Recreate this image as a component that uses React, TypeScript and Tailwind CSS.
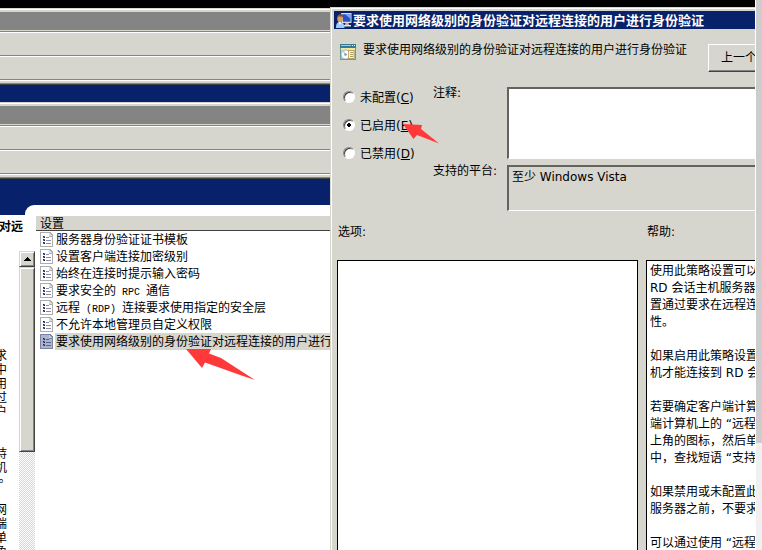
import type { ReactNode } from "react";

const policies: { id: string; label: ReactNode; selected?: boolean }[] = [
  { id: "template", label: "服务器身份验证证书模板" },
  { id: "encryption", label: "设置客户端连接加密级别" },
  { id: "prompt", label: "始终在连接时提示输入密码" },
  { id: "rpc", label: <>要求安全的<Mono> RPC </Mono>通信</> },
  { id: "rdp", label: <>远程<Mono> (RDP) </Mono>连接要求使用指定的安全层</> },
  { id: "admin", label: "不允许本地管理员自定义权限" },
  { id: "nla", label: "要求使用网络级别的身份验证对远程连接的用户进行", selected: true },
];

const description = ["求", "中", "用", "过", "户", "", "", "持", "机", "。", "", "网", "端", "单", "角"];

const states = [
  { value: "none", label: "未配置", accessKey: "C" },
  { value: "enabled", label: "已启用", accessKey: "E" },
  { value: "disabled", label: "已禁用", accessKey: "D" },
];

const helpText = [
  ["使用此策略设置可以", "RD 会话主机服务器", "置通过要求在远程连", "性。"],
  ["如果启用此策略设置", "机才能连接到 RD 会"],
  ["若要确定客户端计算", "端计算机上的 “远程", "上角的图标，然后单", "中，查找短语 “支持"],
  ["如果禁用或未配置此", "服务器之前，不要求"],
  ["可以通过使用 “远程"],
];

export default function App() {
  return (
    <div className="flex h-screen overflow-hidden bg-white font-['Noto_Sans','Noto_Sans_CJK_SC',sans-serif] text-[12px] leading-[17px] text-black">
      <div className="flex min-w-0 flex-1 flex-col bg-black pt-[7px]">
        <div className="flex min-h-0 flex-1">
          <Console />
          <PolicyDialog />
        </div>
      </div>
      <div className="w-[7px] shrink-0 border-l border-white bg-[#f0f0f0]">
        <div className="h-[443px] bg-[#cdcdcd]" />
      </div>
    </div>
  );
}

function Mono({ children }: { children: ReactNode }) {
  return <span className="whitespace-pre font-['Liberation_Mono',monospace] text-[10px]">{children}</span>;
}

function Console() {
  return (
    <div className="relative flex w-[330px] shrink-0 flex-col pt-px">
      <WindowFrame />
      <div className="h-[17px] shrink-0 bg-[#08216b]" />
      <WindowFrame />
      <div className="shrink-0 bg-[#08216b] pt-[26px]">
        <div className="ml-[25px] h-[10px] rounded-tl-[9px] bg-white" />
      </div>
      <div className="flex min-h-0 flex-1 bg-white">
        <Sidebar />
        <div className="min-w-0 flex-1 overflow-hidden pt-px">
          <div className="ml-px h-[15px] border-b border-[#424242] bg-[#d6d6ce] pl-1 leading-[15px]">设置</div>
          <ul>
            {policies.map((p) => (
              <li key={p.id} className="flex h-[17px] items-center pl-[5px]">
                <PolicyIcon selected={p.selected} />
                <span
                  className={`ml-px h-[17px] flex-1 whitespace-nowrap pl-px ${p.selected ? "bg-[#d6d6ce]" : ""}`}
                >
                  {p.label}
                </span>
              </li>
            ))}
          </ul>
        </div>
      </div>
      <svg className="absolute left-[186px] top-[342px]" width="70" height="32" viewBox="0 0 70 32">
        <path d="M0 0 25 0 23 4.5 35 9 69 31 57 27 19 13.5 16 19Z" fill="#ff3939" />
      </svg>
    </div>
  );
}

function WindowFrame() {
  return (
    <div className="shrink-0 border-b border-t border-b-[#424242] border-t-[#d6d6ce]">
      <div className="border-b border-t border-b-[#848484] border-t-white bg-[#d6d6ce] pt-0.5">
        <div className="mb-px h-[18px] bg-[#848484]" />
        <Groove className="h-6" />
        <Groove className="h-6" />
        <Groove className="h-1" />
      </div>
    </div>
  );
}

function Groove({ className }: { className: string }) {
  return (
    <div className={`border-t border-[#848484] ${className}`}>
      <div className="h-px bg-white" />
    </div>
  );
}

function Sidebar() {
  return (
    <div className="flex w-[35px] shrink-0 flex-col">
      <div className="flex h-9 shrink-0 justify-end overflow-hidden whitespace-nowrap pr-3 pt-[3px] font-bold">
        对远
      </div>
      <div className="flex min-h-0 flex-1">
        <div className="w-[19px] overflow-hidden pr-3 pt-[97px] font-['Noto_Sans_CJK_TC',sans-serif] leading-[14px]">
          {description.map((line, i) => (
            <p key={i} className="flex h-[14px] justify-end">
              {line}
            </p>
          ))}
        </div>
        <div className="flex w-4 flex-col bg-[repeating-conic-gradient(#d6d6ce_0_25%,#ffffff_0_50%)] bg-[length:2px_2px]">
          <button
            aria-label="向上滚动"
            className="flex h-4 shrink-0 items-center justify-center border border-b-[#424242] border-l-[#d6d6ce] border-r-[#424242] border-t-[#d6d6ce] bg-[#d6d6ce] shadow-[inset_1px_1px_0_#fff,inset_-1px_-1px_0_#848484]"
          >
            <svg width="7" height="4" viewBox="0 0 7 4" shapeRendering="crispEdges">
              <path d="M3 0h1v1h1v1h1v1h1v1H0V3h1V2h1V1h1Z" />
            </svg>
          </button>
          <div className="h-[185px] shrink-0 border border-b-[#424242] border-l-[#d6d6ce] border-r-[#424242] border-t-[#d6d6ce] bg-[#d6d6ce] shadow-[inset_1px_1px_0_#fff,inset_-1px_-1px_0_#848484]" />
        </div>
      </div>
    </div>
  );
}

function PolicyDialog() {
  return (
    <section className="relative flex min-w-0 flex-1 flex-col overflow-hidden border-l border-t border-[#d6d6ce] bg-[#d6d6ce] font-['DejaVu_Sans','Noto_Sans_CJK_SC',sans-serif]">
      <div className="flex min-h-0 flex-1 flex-col border-l border-t border-white">
        <h1 className="ml-0.5 mt-0.5 flex h-[18px] shrink-0 items-center gap-px whitespace-nowrap bg-[#08216b] pl-0.5 text-[13px] font-bold leading-[18px] text-white">
          <RemoteUserIcon />
          <span className="pt-px">要求使用网络级别的身份验证对远程连接的用户进行身份验证</span>
        </h1>
        <div className="flex h-[58px] shrink-0 items-start pl-2 pt-[15px]">
          <SettingIcon />
          <p className="-mt-0.5 ml-[7px] w-[345px] shrink-0 whitespace-nowrap">
            要求使用网络级别的身份验证对远程连接的用户进行身份验证
          </p>
          <button className="h-7 w-24 shrink-0 whitespace-nowrap border border-b-[#424242] border-l-white border-r-[#424242] border-t-white bg-[#d6d6ce] pl-3 pt-px text-left shadow-[inset_0_-1px_0_#848484]">
            上一个
          </button>
        </div>
        <div className="flex h-[124px] shrink-0">
          <fieldset className="w-[101px] shrink-0 pl-[11px] pt-0.5">
            {states.map((s) => (
              <label key={s.value} className="mb-[10px] flex h-[18px] items-start gap-[5px] whitespace-nowrap">
                <input
                  type="radio"
                  name="state"
                  value={s.value}
                  defaultChecked={s.value === "enabled"}
                  className="mt-0.5 h-3 w-3 shrink-0 appearance-none rounded-full border border-b-white border-l-[#848484] border-r-white border-t-[#848484] bg-white shadow-[inset_1px_1px_0_#424242] checked:bg-[radial-gradient(circle,#000_2px,#fff_2px)]"
                />
                <span className="pt-px">
                  {s.label}(<u>{s.accessKey}</u>)
                </span>
              </label>
            ))}
          </fieldset>
          <div className="grid min-w-0 flex-1 grid-cols-[74px_1fr] grid-rows-[72px_46px] content-start gap-y-[6px]">
            <label htmlFor="comment" className="-mt-0.5">
              注释:
            </label>
            <textarea
              id="comment"
              className="h-full w-full resize-none border-b border-l-2 border-t-2 border-b-white border-l-[#63635f] border-t-[#63635f] bg-white p-1 outline-none"
            />
            <label htmlFor="platform" className="-mt-0.5 whitespace-nowrap">
              支持的平台:
            </label>
            <textarea
              id="platform"
              readOnly
              defaultValue="至少 Windows Vista"
              className="h-full w-full resize-none overflow-hidden border-b border-l-2 border-t-2 border-b-white border-l-[#63635f] border-t-[#63635f] bg-[#d6d6ce] pl-[3px] pt-0.5 outline-none"
            />
          </div>
        </div>
        <div className="flex min-h-0 flex-1 gap-2 pl-[5px] pt-3">
          <div className="flex w-[301px] shrink-0 flex-col">
            <h2 className="h-[37px] shrink-0 pl-px pt-px">选项:</h2>
            <div className="flex-1 border border-b-0 border-black bg-white" />
          </div>
          <div className="flex min-h-0 min-w-0 flex-1 flex-col">
            <h2 className="h-[37px] shrink-0 pl-px pt-px">帮助:</h2>
            <div className="min-h-0 flex-1 overflow-hidden whitespace-nowrap border-l border-t border-black bg-white pl-[3px] pt-0.5">
              {helpText.map((lines) => (
                <p key={lines[0]} className="mb-[17px]">
                  {lines.map((line) => (
                    <span key={line} className="block">
                      {line}
                    </span>
                  ))}
                </p>
              ))}
            </div>
          </div>
        </div>
      </div>
      <svg className="absolute left-[72px] top-[116px]" width="37" height="20" viewBox="0 0 37 20">
        <path d="M0 0 19 1 18 5 36 19.5 14 11 10.500 15Z" fill="#ff3939" />
      </svg>
    </section>
  );
}

function PolicyIcon({ selected }: { selected?: boolean }) {
  return (
    <svg className="shrink-0" width="14" height="15" viewBox="0 0 14 15" shapeRendering="crispEdges">
      <path d="M0 0h10l3 3v12H0Z" fill={selected ? "#7b84a5" : "#adadad"} />
      <path d="M1 1h8v4h3v9H1Z" fill={selected ? "#adb5ce" : "#fff"} />
      <path d="M9 1h1v1h1v1h1v1h-3Z" fill={selected ? "#c6cede" : "#dedede"} />
      <path d="M3 4h2v2H3zM3 7h2v2H3zM3 10h2v2H3z" fill="#636b8c" />
      <path d="M3 4h1v1H3zM3 7h1v1H3zM3 10h1v1H3zM4 5h1v1H4zM4 8h1v1H4zM4 11h1v1H4z" fill="#18214a" />
      <path d="M6 5h3v1H6zM6 8h5v1H6zM6 11h5v1H6z" fill={selected ? "#5a638c" : "#8c8cad"} />
    </svg>
  );
}

function RemoteUserIcon() {
  return (
    <svg className="shrink-0" width="16" height="16" viewBox="0 0 16 16">
      <path d="M5 1h10.500v10H6Z" fill="#dedede" />
      <path d="M6 2.200h8.500v7.500H7Z" fill="#2952c6" />
      <path d="M9 2.200h5.500v4.500Z" fill="#7ba5ff" />
      <path d="M9.500 11h3l1 2.500H8.500Z" fill="#b5b5b5" />
      <path d="M8 13h7v1.500H8Z" fill="#e7e7e7" />
      <path d="M0 16c0-4 1-6 4-6s4.500 2 4.500 6Z" fill="#9ccef7" />
      <path d="M2.500 10 4 13l1.500-3Z" fill="#fff" />
      <ellipse cx="4" cy="6.500" rx="2.800" ry="3.800" fill="#d69c6b" />
      <path d="M1 6.500C.8 3.500 2.500 2 4.500 2S7.200 3.500 6.800 5C5 4 3.500 4.500 2.500 4.500Z" fill="#7b5229" />
    </svg>
  );
}

function SettingIcon() {
  return (
    <svg className="shrink-0" width="16" height="16" viewBox="0 0 16 16">
      <path d="M0 0h16v16H0Z" fill="#639c9c" />
      <path d="M0 0h16v4H0Z" fill="#397b94" />
      <path d="M1 1h10v1H1Z" fill="#8cd6d6" />
      <path d="M12 1h1v1h-1zM14 1h1v1h-1z" fill="#fff" />
      <path d="M1 4h14v2H1Z" fill="#f7e794" />
      <path d="M1 6h14v9H1Z" fill="#b5cebd" />
      <circle cx="5.500" cy="10.500" r="4.500" fill="#fff" stroke="#8c949c" strokeWidth=".7" />
      <path d="M5.500 10.500 2 8A4.500 4.500 0 0 1 4.500 6.200Z" fill="#ced6e7" />
      <circle cx="5.500" cy="10.500" r="1.300" fill="#739cad" />
      <path d="M8.500 6.500h5.500v8H8.500Z" fill="#fff7c6" stroke="#a58c42" strokeWidth=".7" />
      <path d="M10 8.500h3M10 10.500h3M10 12.500h3" stroke="#9c8442" strokeWidth=".8" />
    </svg>
  );
}
